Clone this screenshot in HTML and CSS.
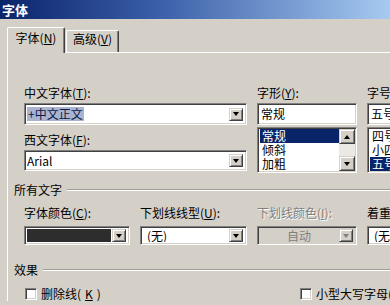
FILE: index.html
```html
<!DOCTYPE html>
<html lang="zh-CN">
<head>
    <meta charset="UTF-8">
    <meta name="viewport" content="width=device-width, initial-scale=1.0">
    <title>字体</title>
    <link rel="stylesheet" href="styles.css">
</head>
<body>
    <div class="titlebar">字体</div>
    <div class="dialog">
        <div class="tabs">
            <div class="tab active">字体(<u>N</u>)</div>
            <div class="tab">高级(<u>V</u>)</div>
        </div>
        <div class="panel">
            <div class="font-row">
                <div class="col col-face">
                    <div class="label">中文字体(<u>T</u>):</div>
                    <div class="combo tall">
                        <span class="combo-text"><span class="sel-text">+中文正文</span></span>
                        <span class="drop-btn"></span>
                    </div>
                    <div class="label label-gap">西文字体(<u>F</u>):</div>
                    <div class="combo tall short">
                        <span class="combo-text">Arial</span>
                        <span class="drop-btn"></span>
                    </div>
                </div>
                <div class="col col-style">
                    <div class="label">字形(<u>Y</u>):</div>
                    <div class="textbox">常规</div>
                    <div class="listbox">
                        <div class="items">
                            <div class="item selected">常规</div>
                            <div class="item">倾斜</div>
                            <div class="item">加粗</div>
                        </div>
                        <div class="scrollbar">
                            <span class="scroll-btn up"></span>
                            <span class="track"></span>
                            <span class="scroll-btn down"></span>
                        </div>
                    </div>
                </div>
                <div class="col col-size">
                    <div class="label">字号(<u>S</u>):</div>
                    <div class="textbox">五号</div>
                    <div class="listbox">
                        <div class="items">
                            <div class="item">四号</div>
                            <div class="item">小四</div>
                            <div class="item selected">五号</div>
                        </div>
                    </div>
                </div>
            </div>

            <div class="group-header first"><span>所有文字</span><span class="rule"></span></div>
            <div class="color-row">
                <div class="col">
                    <div class="label">字体颜色(<u>C</u>):</div>
                    <div class="combo">
                        <span class="combo-text"><span class="swatch"></span></span>
                        <span class="drop-btn"></span>
                    </div>
                </div>
                <div class="col">
                    <div class="label">下划线线型(<u>U</u>):</div>
                    <div class="combo">
                        <span class="combo-text pad">(无)</span>
                        <span class="drop-btn"></span>
                    </div>
                </div>
                <div class="col">
                    <div class="label disabled">下划线颜色(<u>I</u>):</div>
                    <div class="combo is-disabled">
                        <span class="combo-text center">自动</span>
                        <span class="drop-btn"></span>
                    </div>
                </div>
                <div class="col">
                    <div class="label">着重号(·):</div>
                    <div class="combo">
                        <span class="combo-text pad">(无)</span>
                        <span class="drop-btn"></span>
                    </div>
                </div>
            </div>

            <div class="group-header"><span>效果</span><span class="rule"></span></div>
            <div class="effects">
                <div class="check"><span class="box"></span>删除线(<u>K</u>)</div>
                <div class="check"><span class="box"></span>小型大写字母(<u>M</u>)</div>
            </div>
        </div>
    </div>
</body>
</html>
```

FILE: styles.css
```css
body {
    margin: 0;
    width: 390px;
    height: 305px;
    overflow: hidden;
    background-color: #d4d0c8;
    color: #000;
    font-family: "Noto Sans CJK SC", "Liberation Sans", sans-serif;
    font-size: 12px;
    line-height: 14px;
}
u {
    text-decoration: underline;
    text-underline-offset: 1px;
}
.titlebar {
    height: 19px;
    line-height: 19px;
    padding-left: 2px;
    color: #fff;
    font-size: 13px;
    font-weight: bold;
    background: linear-gradient(to right, #0a246a, #3a5ea8 40%, #a6caf0);
}
.dialog {
    padding-left: 7px;
}
.tabs {
    display: flex;
    align-items: flex-end;
    height: 25px;
    margin-top: 8px;
}
.tab {
    height: 20px;
    width: 51px;
    padding-top: 1px;
    text-align: center;
    border-top: 1px solid #fff;
    border-left: 1px solid #fff;
    border-right: 1px solid #404040;
    box-shadow: inset -1px 0 #808080;
    border-radius: 2px 2px 0 0;
    margin-left: 1px;
}
.tab.active {
    position: relative;
    z-index: 1;
    width: 56px;
    height: 22px;
    padding-top: 3px;
    margin-left: 0;
    margin-bottom: -1px;
    background-color: #d4d0c8;
}
.panel {
    border-top: 1px solid #fff;
    border-left: 1px solid #fff;
    padding: 33px 0 0 6px;
}
.label {
    height: 14px;
    margin-bottom: 3px;
    white-space: nowrap;
}
.label-gap {
    margin-top: 8px;
    margin-bottom: 3px;
}
.label.disabled {
    color: #808080;
    text-shadow: 1px 1px #fff;
}
.font-row {
    display: flex;
    gap: 10px;
    padding-left: 10px;
}
.col-face { width: 223px; flex: none; }
.col-style { width: 100px; flex: none; }
.col-size { width: 60px; flex: none; }

.combo, .textbox, .listbox {
    box-sizing: border-box;
    border: 1px solid;
    border-color: #808080 #fff #fff #808080;
    box-shadow: inset 1px 1px #404040, inset -1px -1px #d4d0c8;
    background-color: #fff;
}
.combo {
    display: flex;
    align-items: center;
    height: 19px;
    padding: 2px 3px 2px 2px;
}
.combo.tall { height: 22px; }
.combo.short { height: 21px; }
.combo-text {
    flex: 1;
    height: 100%;
    display: flex;
    align-items: center;
    white-space: nowrap;
    overflow: hidden;
}
.combo-text.pad { padding-left: 4px; }
.combo-text.center { justify-content: center; }
.sel-text {
    background-color: #aab4cf;
    color: #0a1a4a;
    padding: 0 1px;
}
.swatch {
    display: block;
    width: 100%;
    height: 100%;
    background-color: #2d2d2d;
}
.drop-btn, .scroll-btn {
    box-sizing: border-box;
    display: flex;
    align-items: center;
    justify-content: center;
    background-color: #d4d0c8;
    border: 1px solid;
    border-color: #d4d0c8 #404040 #404040 #d4d0c8;
    box-shadow: inset 1px 1px #fff, inset -1px -1px #808080;
}
.drop-btn {
    width: 14px;
    height: 13px;
    flex: none;
    margin-left: 1px;
}
.drop-btn::after, .scroll-btn.down::after {
    content: "";
    border-top: 4px solid #000;
    border-left: 3.5px solid transparent;
    border-right: 3.5px solid transparent;
}
.scroll-btn.up::after {
    content: "";
    border-bottom: 4px solid #000;
    border-left: 3.5px solid transparent;
    border-right: 3.5px solid transparent;
}
.is-disabled {
    background-color: #d4d0c8;
    color: #808080;
}
.is-disabled .drop-btn::after {
    border-top-color: #808080;
}

.textbox {
    height: 22px;
    padding: 3px 3px;
    white-space: nowrap;
    overflow: hidden;
}
.listbox {
    display: flex;
    margin-top: 2px;
    padding: 1px;
    height: 46px;
}
.items {
    flex: 1;
    padding-left: 1px;
    overflow: hidden;
}
.item {
    height: 14px;
    padding-left: 2px;
    white-space: nowrap;
}
.item.selected {
    background-color: #0a246a;
    color: #fff;
}
.scrollbar {
    width: 16px;
    display: flex;
    flex-direction: column;
}
.scroll-btn {
    width: 16px;
    height: 15px;
}
.track {
    flex: 1;
    background-color: #ebe9e4;
}

.group-header {
    display: flex;
    align-items: center;
    height: 14px;
    margin-top: 18px;
}
.group-header.first {
    margin-top: 10px;
}
.rule {
    flex: 1;
    margin-left: 5px;
    border-top: 1px solid #a09d96;
    border-bottom: 1px solid #fff;
}
.color-row {
    display: grid;
    grid-template-columns: 106px 107px 100px 60px;
    column-gap: 10px;
    padding-left: 10px;
    margin-top: 9px;
}
.color-row .label {
    margin-bottom: 6px;
}
.effects {
    display: grid;
    grid-template-columns: 275px 1fr;
    padding-left: 11px;
    margin-top: 10px;
}
.check {
    display: flex;
    align-items: center;
    gap: 4px;
    height: 14px;
    white-space: nowrap;
}
.box {
    box-sizing: border-box;
    width: 12px;
    height: 12px;
    background-color: #fff;
    border: 1px solid;
    border-color: #808080 #fff #fff #808080;
    box-shadow: inset 1px 1px #404040, inset -1px -1px #d4d0c8;
}
```
